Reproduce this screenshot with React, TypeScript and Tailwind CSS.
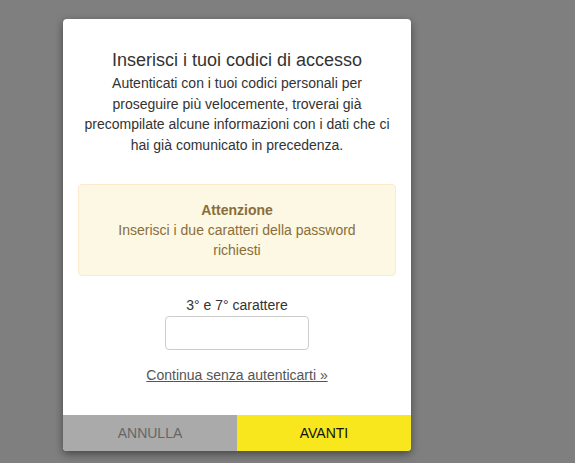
import React from "react";

export default function App() {
  return (
    <div
      className="w-[575px] h-[463px] bg-[#7f7f7f] relative overflow-hidden"
      style={{ fontFamily: '"Liberation Sans", Arial, sans-serif' }}
    >
      <div className="absolute left-[63px] top-[19px] w-[348px] bg-white rounded-[4px] shadow-[0_3px_8px_rgba(0,0,0,0.45)] overflow-hidden">
        <div className="px-[15px] pt-[30px] text-center">
          <h1 className="text-[18px] leading-[22px] text-[#333]">Inserisci i tuoi codici di accesso</h1>
          <p className="mt-[2px] text-[14px] leading-[20.6px] text-[#333]">
            Autenticati con i tuoi codici personali per proseguire più velocemente, troverai già precompilate alcune informazioni con i dati che ci hai già comunicato in precedenza.
          </p>
          <div className="mt-[29px] border border-[#faebcc] bg-[#fcf8e3] rounded-[4px] px-[15px] py-[15px] text-[14px] leading-[20px] text-[#8a6d3b]">
            <div className="font-bold">Attenzione</div>
            <div>Inserisci i due caratteri della password richiesti</div>
          </div>
          <div className="mt-[19px] text-[14px] leading-[20px] text-[#333]">3° e 7° carattere</div>
          <div className="mt-[1px] flex justify-center">
            <input className="w-[144px] h-[34px] border border-[#ccc] rounded-[4px] outline-none" />
          </div>
          <div className="mt-[15px] text-[14px] leading-[20px]">
            <a className="text-[#555] underline">Continua senza autenticarti »</a>
          </div>
        </div>
        <div className="mt-[30px] flex h-[36px]">
          <button className="flex-1 bg-[#aaaaaa] text-[#666] text-[14px]">ANNULLA</button>
          <button className="flex-1 bg-[#f7e71c] text-[#111] text-[14px]">AVANTI</button>
        </div>
      </div>
    </div>
  );
}
